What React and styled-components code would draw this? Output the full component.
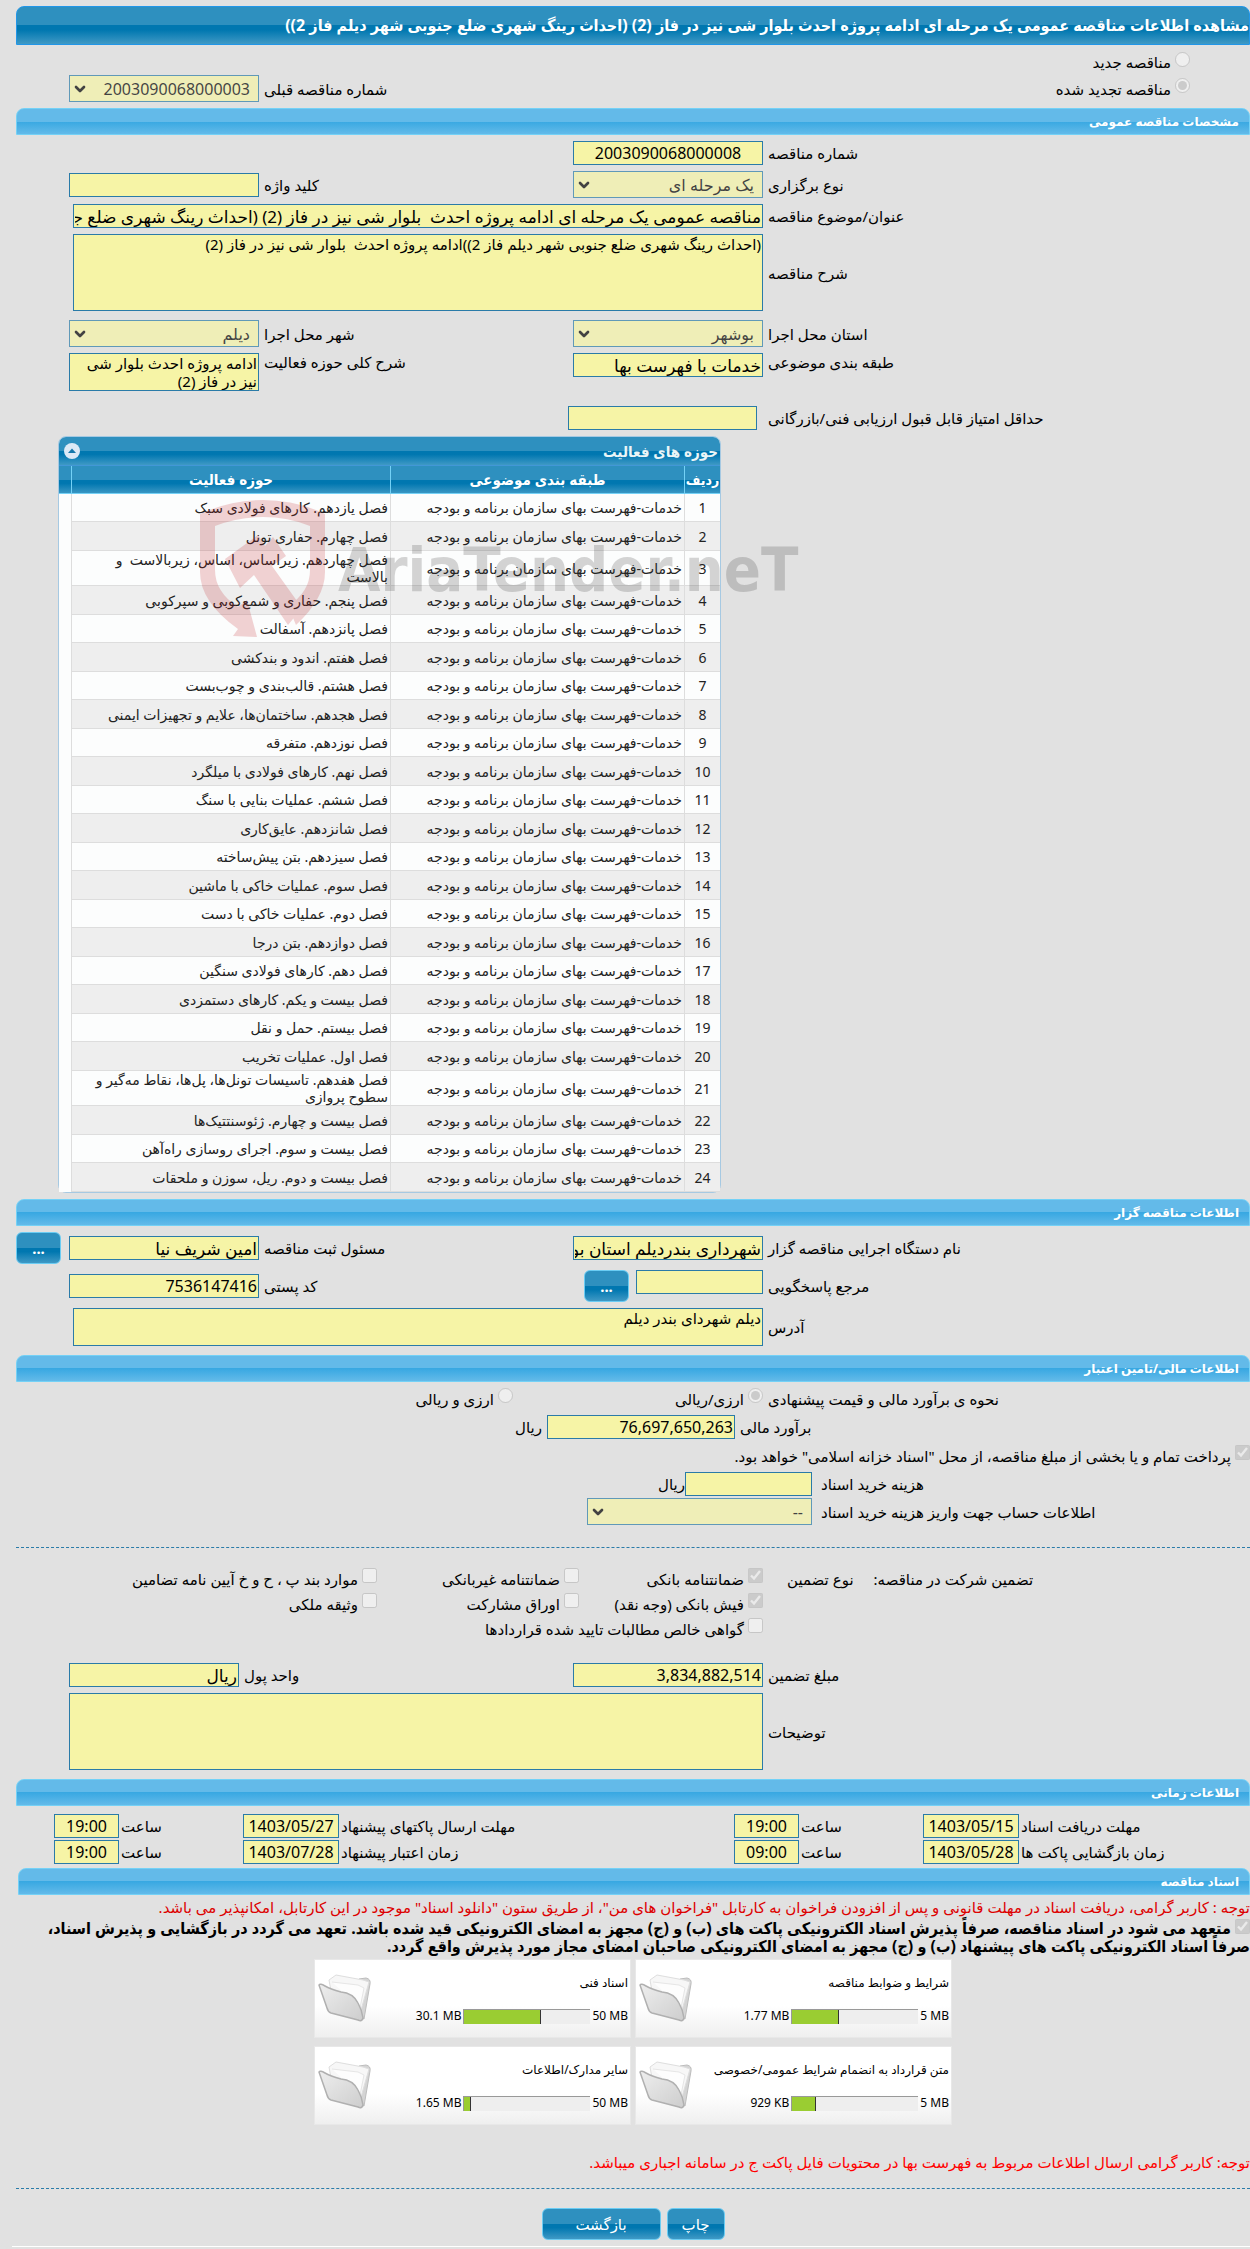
import styled, { createGlobalStyle, css } from "styled-components";
import { ChevronDown } from "lucide-react";

const rowText = "خدمات-فهرست بهای سازمان برنامه و بودجه";

const activities = [
    "فصل یازدهم. کارهای فولادی سبک",
    "فصل چهارم. حفاری تونل",
    "فصل چهاردهم. زیراساس، اساس، زیربالاست\u00a0 و بالاست",
    "فصل پنجم. حفاری و شمع‌کوبی و سپرکوبی",
    "فصل پانزدهم. آسفالت",
    "فصل هفتم. اندود و بندکشی",
    "فصل هشتم. قالب‌بندی و چوب‌بست",
    "فصل هجدهم. ساختمان‌ها، علایم و تجهیزات ایمنی",
    "فصل نوزدهم. متفرقه",
    "فصل نهم. کارهای فولادی با میلگرد",
    "فصل ششم. عملیات بنایی با سنگ",
    "فصل شانزدهم. عایق‌کاری",
    "فصل سیزدهم. بتن پیش‌ساخته",
    "فصل سوم. عملیات خاکی با ماشین",
    "فصل دوم. عملیات خاکی با دست",
    "فصل دوازدهم. بتن درجا",
    "فصل دهم. کارهای فولادی سنگین",
    "فصل بیست و یکم. کارهای دستمزدی",
    "فصل بیستم. حمل و نقل",
    "فصل اول. عملیات تخریب",
    "فصل هفدهم. تاسیسات تونل‌ها، پل‌ها، نقاط مه‌گیر و سطوح پروازی",
    "فصل بیست و چهارم. ژئوسنتتیک‌ها",
    "فصل بیست و سوم. اجرای روسازی راه‌آهن",
    "فصل بیست و دوم. ریل، سوزن و ملحقات",
];

const documents = [
    { name: "شرایط و ضوابط مناقصه", used: "1.77 MB", limit: "5 MB", percent: 37 },
    { name: "اسناد فنی", used: "30.1 MB", limit: "50 MB", percent: 61 },
    { name: "متن قرارداد به انضمام شرایط عمومی/خصوصی", used: "929 KB", limit: "5 MB", percent: 19 },
    { name: "سایر مدارک/اطلاعات", used: "1.65 MB", limit: "50 MB", percent: 5 },
];

const deadlines = [
    { id: "docs", label: "مهلت دریافت اسناد", date: "1403/05/15", time: "19:00" },
    { id: "send", label: "مهلت ارسال پاکتهای پیشنهاد", date: "1403/05/27", time: "19:00" },
    { id: "open", label: "زمان بازگشایی پاکت ها", date: "1403/05/28", time: "09:00" },
    { id: "valid", label: "زمان اعتبار پیشنهاد", date: "1403/07/28", time: "19:00" },
];

export default function App() {
    return (
        <>
            <GlobalStyle />
            <Page dir="rtl">
                <PageTitle>
                    مشاهده اطلاعات مناقصه عمومی یک مرحله ای ادامه پروژه احدث بلوار شی نیز در فاز (2) (احداث رینگ شهری ضلع جنوبی شهر دیلم فاز 2))
                </PageTitle>
                <TenderKind />
                <GeneralSection />
                <Activities />
                <OwnerSection />
                <FinanceSection />
                <GuaranteeSection />
                <ScheduleSection />
                <DocumentsSection />
                <Actions>
                    <GlossButton $width={58}>چاپ</GlossButton>
                    <GlossButton $width={119}>بازگشت</GlossButton>
                </Actions>
                <BottomEdge />
            </Page>
        </>
    );
}

function Choice({ type = "checkbox", name, checked = false, children }) {
    return (
        <ChoiceLabel>
            <input type={type} name={name} defaultChecked={checked} disabled />
            {children}
        </ChoiceLabel>
    );
}

function Dropdown({ id, value }) {
    return (
        <SelectBox>
            <select id={id} disabled>
                <option>{value}</option>
            </select>
            <ChevronDown size={16} strokeWidth={4} />
        </SelectBox>
    );
}

function TenderKind() {
    return (
        <Kinds>
            <Choice type="radio" name="kind">مناقصه جدید</Choice>
            <Row>
                <Choice type="radio" name="kind" checked>مناقصه تجدید شده</Choice>
                <span />
                <Label htmlFor="previous">شماره مناقصه قبلی</Label>
                <Dropdown id="previous" value="2003090068000003" />
            </Row>
        </Kinds>
    );
}

function GeneralSection() {
    return (
        <Section>
            <SectionTitle>مشخصات مناقصه عمومی</SectionTitle>
            <Row>
                <Label htmlFor="number">شماره مناقصه</Label>
                <Field id="number" $center defaultValue="2003090068000008" readOnly />
            </Row>
            <Row>
                <Label htmlFor="type">نوع برگزاری</Label>
                <Dropdown id="type" value="یک مرحله ای" />
                <Label htmlFor="keyword">کلید واژه</Label>
                <Field id="keyword" readOnly />
            </Row>
            <Row>
                <Label htmlFor="subject">عنوان/موضوع مناقصه</Label>
                <Field
                    id="subject"
                    $wide
                    $large
                    defaultValue="مناقصه عمومی یک مرحله ای ادامه پروژه احدث  بلوار شی نیز در فاز (2) (احداث رینگ شهری ضلع جنوبی شهر دیلم فاز 2))"
                    readOnly
                />
            </Row>
            <Row>
                <Label htmlFor="description">شرح مناقصه</Label>
                <Area
                    id="description"
                    $wide
                    $height={77}
                    defaultValue="(احداث رینگ شهری ضلع جنوبی شهر دیلم فاز 2))ادامه پروژه احدث  بلوار شی نیز در فاز (2)"
                    readOnly
                />
            </Row>
            <Row $before={3}>
                <Label htmlFor="province">استان محل اجرا</Label>
                <Dropdown id="province" value="بوشهر" />
                <Label htmlFor="city">شهر محل اجرا</Label>
                <Dropdown id="city" value="دیلم" />
            </Row>
            <Row $top>
                <Label htmlFor="category">طبقه بندی موضوعی</Label>
                <Field id="category" $large defaultValue="خدمات با فهرست بها" readOnly />
                <Label htmlFor="scope">شرح کلی حوزه فعالیت</Label>
                <Area id="scope" $height={38} defaultValue="ادامه پروژه احدث بلوار شی نیز در فاز (2)" readOnly />
            </Row>
            <Row $before={9} $cols="minmax(0, 1fr) 195px 494px">
                <Label htmlFor="score">حداقل امتیاز قابل قبول ارزیابی فنی/بازرگانی</Label>
                <Inset><Field id="score" readOnly /></Inset>
            </Row>
        </Section>
    );
}

function Activities() {
    return (
        <Panel>
            <PanelTitle>
                حوزه های فعالیت
                <Collapse aria-label="بستن">
                    <svg width="16" height="16" viewBox="0 0 16 16">
                        <circle cx="8" cy="8" r="8" fill="#dce9f6" />
                        <path d="M4 10 8 5.5 12 10Z" fill="#1577ab" />
                    </svg>
                </Collapse>
            </PanelTitle>
            <Table>
                <colgroup>
                    <col width="36" />
                    <col width="294" />
                    <col />
                    <col width="12" />
                </colgroup>
                <thead>
                    <tr>
                        <th>ردیف</th>
                        <th>طبقه بندی موضوعی</th>
                        <th>حوزه فعالیت</th>
                        <th aria-hidden="true" />
                    </tr>
                </thead>
                <tbody>
                    {activities.map((activity, index) => (
                        <tr key={activity}>
                            <td>{index + 1}</td>
                            <td>{rowText}</td>
                            <td>{activity}</td>
                            <td />
                        </tr>
                    ))}
                </tbody>
            </Table>
            <Watermark aria-hidden="true">
                <svg width="126" height="138" viewBox="0 0 126 138" fill="#c1272d">
                    <path d="M0 14Q30 0 63 0T125 14V72Q125 98 96 125L88 106Q110 92 110 70V26Q88 17 63 17T15 26V70Q15 92 38 107L47 100L57 137L33 136L38 129Q0 102 0 72Z" />
                    <path d="M25 59 58 35 65 46 73 37 86 56 72 66 102 108 88 125 54 75 40 88Z" />
                </svg>
                <span dir="ltr">AriaTender.neT</span>
            </Watermark>
        </Panel>
    );
}

function OwnerSection() {
    return (
        <Section>
            <SectionTitle>اطلاعات مناقصه گزار</SectionTitle>
            <Row $cols="minmax(0, 1fr) 190px 304px 190px 48px" $pad={0}>
                <Label htmlFor="owner">نام دستگاه اجرایی مناقصه گزار</Label>
                <Field id="owner" $large defaultValue="شهرداری بندردیلم استان بوشهر" readOnly />
                <Label htmlFor="registrar">مسئول ثبت مناقصه</Label>
                <Field id="registrar" $large defaultValue="امین شریف نیا" readOnly />
                <EndCell><GlossButton $width={45} $dots>...</GlossButton></EndCell>
            </Row>
            <Row>
                <Label htmlFor="contact">مرجع پاسخگویی</Label>
                <Pair>
                    <Field id="contact" readOnly />
                    <GlossButton $width={45} $dots>...</GlossButton>
                </Pair>
                <Label htmlFor="postal">کد پستی</Label>
                <Field id="postal" defaultValue="7536147416" readOnly />
            </Row>
            <Row>
                <Label htmlFor="address">آدرس</Label>
                <Area id="address" $wide $height={38} defaultValue="دیلم شهردای بندر دیلم" readOnly />
            </Row>
        </Section>
    );
}

function FinanceSection() {
    return (
        <Section $before={3}>
            <SectionTitle>اطلاعات مالی/تامین اعتبار</SectionTitle>
            <Row $cols="minmax(0, 1fr) 245px 497px" $pad={0}>
                <Label as="span">نحوه ی برآورد مالی و قیمت پیشنهادی</Label>
                <Choice type="radio" name="currency" checked>ارزی/ریالی</Choice>
                <Choice type="radio" name="currency">ارزی و ریالی</Choice>
            </Row>
            <Row $cols="minmax(0, 1fr) 188px 526px" $pad={0}>
                <Label htmlFor="estimate">برآورد مالی</Label>
                <Field id="estimate" defaultValue="76,697,650,263" readOnly />
                <Text>ریال</Text>
            </Row>
            <Choice checked>پرداخت تمام و یا بخشی از مبلغ مناقصه، از محل "اسناد خزانه اسلامی" خواهد بود.</Choice>
            <Stack>
                <Row $cols="minmax(0, 1fr) 127px 669px" $pad={0} $gap={0}>
                    <Label $indent={9} htmlFor="cost">هزینه خرید اسناد</Label>
                    <Field id="cost" readOnly />
                    <Text>ریال</Text>
                </Row>
                <Row $cols="minmax(0, 1fr) 225px" $pad={571} $gap={0}>
                    <Label $indent={9} htmlFor="account">اطلاعات حساب جهت واریز هزینه خرید اسناد</Label>
                    <Dropdown id="account" value="--" />
                </Row>
            </Stack>
            <Divider />
        </Section>
    );
}

function GuaranteeSection() {
    return (
        <Section>
            <Guarantees>
                <GuaranteeTitle>
                    <span>تضمین شرکت در مناقصه:</span>
                    <span>نوع تضمین</span>
                </GuaranteeTitle>
                <Choice checked>ضمانتنامه بانکی</Choice>
                <Choice>ضمانتنامه غیربانکی</Choice>
                <Choice>موارد بند پ ، ح و خ آیین نامه تضامین</Choice>
                <span />
                <Choice checked>فیش بانکی (وجه نقد)</Choice>
                <Choice>اوراق مشارکت</Choice>
                <Choice>وثیقه ملکی</Choice>
                <span />
                <Choice>گواهی خالص مطالبات تایید شده قراردادها</Choice>
            </Guarantees>
            <Row $before={16} $cols="minmax(0, 1fr) 190px 324px 170px">
                <Label htmlFor="amount">مبلغ تضمین</Label>
                <Field id="amount" defaultValue="3,834,882,514" readOnly />
                <Label htmlFor="unit">واحد پول</Label>
                <Field id="unit" $large defaultValue="ریال" readOnly />
            </Row>
            <Row>
                <Label htmlFor="notes">توضیحات</Label>
                <Area id="notes" $full $height={77} readOnly />
            </Row>
        </Section>
    );
}

function ScheduleSection() {
    return (
        <Section $before={3}>
            <SectionTitle>اطلاعات زمانی</SectionTitle>
            <Schedule>
                {deadlines.map(({ id, label, date, time }) => (
                    <ScheduleItem key={id}>
                        <Label htmlFor={`${id}-date`}>{label}</Label>
                        <Field id={`${id}-date`} $center defaultValue={date} readOnly />
                        <Label htmlFor={`${id}-time`}>ساعت</Label>
                        <Field id={`${id}-time`} $center defaultValue={time} readOnly />
                    </ScheduleItem>
                ))}
            </Schedule>
        </Section>
    );
}

function DocumentsSection() {
    return (
        <Documents>
            <SectionTitle>اسناد مناقصه</SectionTitle>
            <Warning>
                توجه : کاربر گرامی، دریافت اسناد در مهلت قانونی و پس از افزودن فراخوان به کارتابل "فراخوان های من"، از طریق ستون "دانلود اسناد" موجود در این کارتابل، امکانپذیر می باشد.
            </Warning>
            <Commitment>
                <input type="checkbox" defaultChecked disabled />{" "}
                متعهد می شود در اسناد مناقصه، صرفاً پذیرش اسناد الکترونیکی پاکت های (ب) و (ج) مجهز به امضای الکترونیکی قید شده باشد. تعهد می گردد در بازگشایی و پذیرش اسناد، صرفاً اسناد الکترونیکی پاکت های پیشنهاد (ب) و (ج) مجهز به امضای الکترونیکی صاحبان امضای مجاز مورد پذیرش واقع گردد.
            </Commitment>
            <Cards>
                {documents.map((doc) => (
                    <Card key={doc.name}>
                        <h3>{doc.name}</h3>
                        <Usage>
                            <span dir="ltr">{doc.limit}</span>
                            <Meter role="progressbar" aria-label={doc.name} aria-valuenow={doc.percent}>
                                <div style={{ width: `${doc.percent}%` }} />
                            </Meter>
                            <span dir="ltr">{doc.used}</span>
                        </Usage>
                        <Folder />
                    </Card>
                ))}
            </Cards>
            <Warning $bright>
                توجه: کاربر گرامی ارسال اطلاعات مربوط به فهرست بها در محتویات فایل پاکت ج در سامانه اجباری میباشد.
            </Warning>
            <Divider />
        </Documents>
    );
}

function Folder() {
    return (
        <svg width="56" height="56" viewBox="0 0 56 56">
            <defs>
                <linearGradient id="flap" x1="0" y1="0" x2="1" y2="1">
                    <stop offset="0" stopColor="#eeeeee" />
                    <stop offset="1" stopColor="#cdcdcd" />
                </linearGradient>
            </defs>
            <path d="M42 7 49 6Q54 7 53 12L47 47 40 44Z" fill="#d4d4d4" stroke="#bdbdbd" />
            <path d="M12 8 19 3 46 8 52 10 44 38 16 30Z" fill="#f7f7f7" stroke="#dedede" />
            <path d="M15 10 41 13 47 16 43 36" fill="#fdfdfd" stroke="#e6e6e6" />
            <path d="M2 13Q3 11 8 14T24 20Q36 21 41 31Q45 38 46 46Q45 50 41 48L14 41Q11 40 10 36Z" fill="url(#flap)" stroke="#b0b0b0" strokeWidth="1.5" />
        </svg>
    );
}

const darkGloss = css`
    background: linear-gradient(#2e90bf 0, #2e90bf 50%, #0077b0 50%, #0077b0 62%, #3f99c5 100%);
`;

const narrowFont = css`
    font-family: "Noto Sans", "DejaVu Sans Condensed", "DejaVu Sans", sans-serif;
`;

const GlobalStyle = createGlobalStyle`
    * {
        box-sizing: border-box;
    }

    body {
        margin: 0;
        background: #e1e1e1;
        color: #000000;
        font-family: "Noto Sans", "DejaVu Sans", sans-serif;
        font-size: 15px;
        line-height: 18px;
        overflow-x: hidden;
    }

    input, select, textarea, button {
        font-family: inherit;
    }
`;

const Page = styled.main`
    padding: 6px 0 0 16px;
`;

const PageTitle = styled.h1`
    ${darkGloss}
    ${narrowFont}
    height: 39px;
    margin: 0;
    overflow: hidden;
    border: 1px solid #2196e8;
    border-radius: 8px 8px 0 0;
    color: #ffffff;
    font-size: 16px;
    line-height: 37px;
    white-space: nowrap;
`;

const Section = styled.section`
    display: flex;
    flex-direction: column;
    gap: 6px;
    margin-top: ${({ $before = 0 }) => 6 + $before}px;
`;

const SectionTitle = styled.h2`
    height: 27px;
    margin: 0;
    padding: 0 10px;
    border: 1px solid #74d1f6;
    border-radius: 8px 8px 0 0;
    background: linear-gradient(#63bae9 0, #63bae9 50%, #38a8e2 50%, #63bae9 100%);
    color: #ffffff;
    font-size: 12px;
    line-height: 26px;
`;

const Row = styled.div`
    display: grid;
    grid-template-columns: ${({ $cols }) => $cols || "minmax(0, 1fr) 190px 304px 190px"};
    column-gap: ${({ $gap = 5 }) => $gap}px;
    align-items: ${({ $top }) => ($top ? "start" : "center")};
    margin-top: ${({ $before = 0 }) => $before}px;
    padding-left: ${({ $pad = 53 }) => $pad}px;
`;

const Stack = styled.div`
    display: flex;
    flex-direction: column;
    gap: 2px;
`;

const Label = styled.label`
    padding-left: ${({ $indent = 0 }) => $indent}px;
    text-align: left;
    white-space: nowrap;
`;

const Text = styled.span`
    white-space: nowrap;
`;

const fieldLook = css`
    display: block;
    width: 100%;
    margin: 0;
    padding: 0 1px;
    border: 1px solid #2a7ba8;
    border-radius: 0;
    outline: none;
    background: #f6f4a6;
    color: #000000;
`;

const Field = styled.input`
    ${fieldLook}
    grid-column: ${({ $wide }) => ($wide ? "span 3" : "auto")};
    width: ${({ $wide }) => ($wide ? "calc(100% - 4px)" : "100%")};
    height: 24px;
    font-size: ${({ $large }) => ($large ? 17 : 16)}px;
    text-align: ${({ $center }) => ($center ? "center" : "right")};
`;

const Area = styled.textarea`
    ${fieldLook}
    grid-column: ${({ $wide, $full }) => ($wide || $full ? "span 3" : "auto")};
    width: ${({ $wide }) => ($wide ? "calc(100% - 4px)" : "100%")};
    height: ${({ $height }) => $height}px;
    overflow: hidden;
    resize: none;
    font-size: 15px;
    line-height: 18px;
`;

const SelectBox = styled.div`
    position: relative;
    opacity: 0.7;

    select {
        ${fieldLook}
        height: 27px;
        padding: 0 8px;
        appearance: none;
        opacity: 1;
        font-size: 16px;
    }

    svg {
        position: absolute;
        top: 6px;
        left: 3px;
    }
`;

const ChoiceLabel = styled.label`
    display: flex;
    align-items: center;
    gap: 4px;
    min-height: 20px;
    white-space: nowrap;

    input {
        flex: none;
        width: 15px;
        height: 15px;
        margin: 0 0 6px;
    }
`;

const Kinds = styled.div`
    padding-top: 4px;

    ${ChoiceLabel} {
        margin-right: 60px;
        min-height: 26px;
    }
`;

const Inset = styled.div`
    padding-right: 6px;
`;

const EndCell = styled.div`
    display: flex;
    justify-content: flex-end;
`;

const Pair = styled.div`
    display: flex;
    gap: 7px;

    input {
        width: 127px;
    }
`;

const GlossButton = styled.button`
    ${darkGloss}
    flex: none;
    width: ${({ $width }) => $width}px;
    height: 32px;
    padding: 0;
    border: 1px solid #6accf3;
    border-radius: 6px;
    color: #ffffff;
    font-size: 15px;
    font-weight: ${({ $dots }) => ($dots ? "bold" : "normal")};
`;

const Panel = styled.div`
    position: relative;
    width: 663px;
    margin: 6px auto 0 42px;
    border: 1px solid #a6c9e2;
    border-radius: 8px;
    background: #fcfdfd;
`;

const PanelTitle = styled.div`
    ${darkGloss}
    ${narrowFont}
    display: flex;
    align-items: center;
    justify-content: space-between;
    height: 29px;
    padding: 0 2px 0 5px;
    border-bottom: 1px solid #4297d7;
    border-radius: 7px 7px 0 0;
    color: #eaf5f7;
    font-size: 15px;
    font-weight: bold;
`;

const Collapse = styled.button`
    display: flex;
    padding: 0;
    border: 0;
    background: none;
`;

const Table = styled.table`
    width: 100%;
    border-collapse: separate;
    border-spacing: 0;
    table-layout: fixed;
    color: #222222;
    font-size: 14px;
    line-height: 17px;

    thead tr {
        ${darkGloss}
    }

    th {
        ${narrowFont}
        height: 28px;
        padding: 0;
        border-bottom: 1px solid #74d1f6;
        border-left: 1px solid #74d1f6;
        color: #ffffff;
        font-size: 15px;
        white-space: nowrap;
    }

    th:first-child {
        font-size: 14px;
    }

    td {
        height: 28px;
        padding: 0 2px;
        border-bottom: 1px solid #dddddd;
        border-left: 1px solid #dddddd;
    }

    td:first-child {
        text-align: center;
    }

    td:nth-child(2) {
        white-space: nowrap;
    }

    tbody tr:nth-child(even) td {
        height: 29px;
        background: #eeeeee;
    }

    th:last-child {
        border-left: 0;
    }

    tbody tr td:last-child {
        border: 0;
        background: #fcfdfd;
    }
`;

const Watermark = styled.div`
    position: absolute;
    top: 63px;
    left: 141px;
    display: flex;
    flex-direction: row-reverse;
    gap: 12px;
    opacity: 0.2;
    pointer-events: none;

    svg {
        flex: none;
    }

    span {
        color: #333333;
        font-family: "DejaVu Sans Condensed", "DejaVu Sans", sans-serif;
        font-size: 61px;
        font-weight: bold;
        line-height: 140px;
        white-space: nowrap;
    }
`;

const Guarantees = styled.div`
    display: grid;
    grid-template-columns: minmax(0, 1fr) 179px 197px 361px;
    grid-auto-rows: 25px;
    column-gap: 5px;
    align-items: center;
    margin-top: 12px;
`;

const GuaranteeTitle = styled.div`
    display: flex;
    justify-content: flex-end;
    gap: 20px;
    padding-left: 19px;
    white-space: nowrap;
`;

const Schedule = styled.div`
    display: grid;
    grid-template-columns: minmax(0, 1fr) 678px;
    gap: 2px;
    margin-top: 2px;
    padding-left: 38px;
`;

const ScheduleItem = styled.div`
    display: grid;
    grid-template-columns: minmax(0, 1fr) 96px 120px 65px;
    column-gap: 2px;
    align-items: center;
`;

const Documents = styled.section`
    margin-top: 4px;

    ${SectionTitle} {
        margin-left: 2px;
    }
`;

const Warning = styled.p`
    margin: ${({ $bright }) => ($bright ? "27px 0 15px" : "2px 0")};
    color: ${({ $bright }) => ($bright ? "#ff0000" : "#dd0000")};
    line-height: 20px;
    white-space: nowrap;
`;

const Commitment = styled.label`
    ${narrowFont}
    display: block;
    font-size: 16px;
    font-weight: bold;

    input {
        width: 15px;
        height: 15px;
        margin: 0;
    }
`;

const Cards = styled.div`
    display: grid;
    grid-template-columns: 317px 317px;
    gap: 8px 4px;
    justify-content: center;
    margin-top: 4px;
`;

const Card = styled.article`
    display: grid;
    grid-template-columns: minmax(0, 1fr) 56px;
    grid-template-rows: 32px 32px;
    height: 79px;
    padding: 8px 2px 0 2px;
    border: 1px solid #e8e8e8;
    background: linear-gradient(#ffffff 60%, #efefef);
    font-size: 12px;

    h3 {
        margin: 0;
        font-size: 12px;
        font-weight: normal;
        line-height: 30px;
        white-space: nowrap;
    }

    svg {
        grid-column: 2;
        grid-row: 1 / 3;
        margin-top: 4px;
    }
`;

const Usage = styled.div`
    display: flex;
    gap: 2px;
    align-items: center;
`;

const Meter = styled.div`
    width: 127px;
    height: 15px;
    border-top: 1px solid #999999;
    border-left: 1px solid #999999;
    background: #eeeeee;
    direction: ltr;

    div {
        height: 100%;
        border-right: 1px solid #333333;
        background: #9acd32;
    }
`;

const Divider = styled.hr`
    width: 100%;
    margin: 16px 0 0;
    border: 0;
    border-top: 1px dashed #2a7ba8;
`;

const Actions = styled.div`
    display: flex;
    gap: 6px;
    justify-content: center;
    padding: 19px 0 6px;
`;

const BottomEdge = styled.div`
    height: 1px;
    margin-left: -4px;
    background: #ffffff;
`;
